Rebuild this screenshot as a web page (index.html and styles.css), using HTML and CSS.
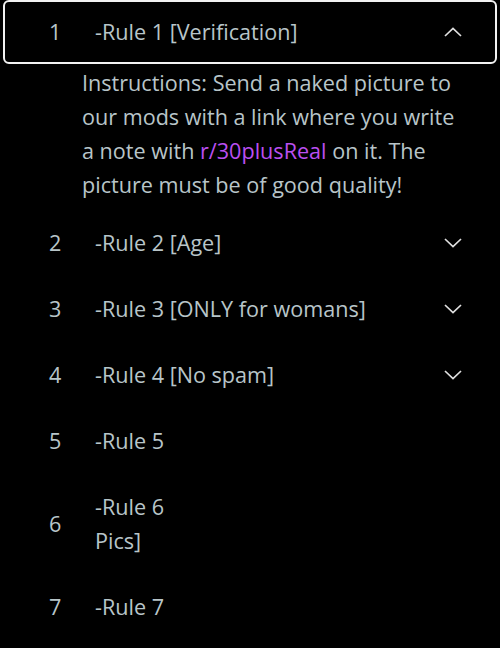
FILE: index.html
```html
<!DOCTYPE html>
<html>
<head>
<meta charset="utf-8">
<link rel="stylesheet" href="styles.css">
</head>
<body>
<div class="list">
  <div class="item open">
    <div class="row">
      <span class="num">1</span>
      <span class="title">-Rule 1 [Verification]</span>
      <svg class="chev" viewBox="0 0 18 10" width="18" height="10"><polyline points="1,9 9,1.5 17,9" fill="none" stroke="#e0e0e0" stroke-width="1.7"/></svg>
    </div>
  </div>
  <div class="body">Instructions: Send a naked picture to<br>our mods with a link where you write<br>a note with <span class="link">r/30plusReal</span> on it. The<br>picture must be of good quality!</div>
  <div class="item">
    <div class="row">
      <span class="num">2</span>
      <span class="title">-Rule 2 [Age]</span>
      <svg class="chev" viewBox="0 0 18 10" width="18" height="10"><polyline points="1,1 9,8.5 17,1" fill="none" stroke="#e0e0e0" stroke-width="1.7"/></svg>
    </div>
  </div>
  <div class="item">
    <div class="row">
      <span class="num">3</span>
      <span class="title">-Rule 3 [ONLY for womans]</span>
      <svg class="chev" viewBox="0 0 18 10" width="18" height="10"><polyline points="1,1 9,8.5 17,1" fill="none" stroke="#e0e0e0" stroke-width="1.7"/></svg>
    </div>
  </div>
  <div class="item">
    <div class="row">
      <span class="num">4</span>
      <span class="title">-Rule 4 [No spam]</span>
      <svg class="chev" viewBox="0 0 18 10" width="18" height="10"><polyline points="1,1 9,8.5 17,1" fill="none" stroke="#e0e0e0" stroke-width="1.7"/></svg>
    </div>
  </div>
  <div class="item">
    <div class="row">
      <span class="num">5</span>
      <span class="title">-Rule 5</span>
    </div>
  </div>
  <div class="item">
    <div class="row">
      <span class="num">6</span>
      <span class="title">-Rule 6<br>Pics]</span>
    </div>
  </div>
  <div class="item">
    <div class="row">
      <span class="num">7</span>
      <span class="title">-Rule 7</span>
    </div>
  </div>
</div>
</body>
</html>
```
FILE: styles.css
```css
html, body {
  margin: 0;
  padding: 0;
  background: #000;
}
body {
  font-family: "Open Sans", "Noto Sans", sans-serif;
  font-size: 21.6px;
  color: #b8c5c9;
  width: 500px;
  height: 648px;
  overflow: hidden;
}
.list {
  padding: 0 3px;
  display: flex;
  flex-direction: column;
}
.item {
  border: 2px solid transparent;
  border-radius: 6px;
}
.item.open {
  border-color: #f2f2f2;
}
.row {
  display: flex;
  align-items: center;
  padding: 14px 33px 14px 44px;
  line-height: 34px;
}
.item.open .row {
  padding-top: 13px;
  padding-bottom: 13px;
}
.num {
  width: 46px;
  flex: none;
}
.title {
  flex: 1;
}
.chev {
  flex: none;
  display: block;
}
.body {
  padding: 2px 0 8px 79px;
  line-height: 34px;
}
.link {
  color: #bb4ff0;
}
```
